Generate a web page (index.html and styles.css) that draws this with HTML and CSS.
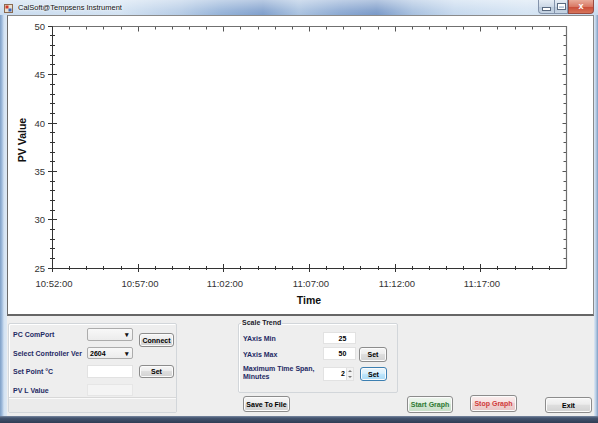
FILE: index.html
```html
<!DOCTYPE html>
<html>
<head>
<meta charset="utf-8">
<title>CalSoft@Tempsens Instrument</title>
<link rel="stylesheet" href="styles.css">
</head>
<body>
<div class="window">
  <div class="titlebar">
    <svg class="appicon" width="9" height="10" viewBox="0 0 9 10">
      <rect x="0.5" y="1.5" width="8" height="8" fill="#e8e0d0" stroke="#8a6a50"/>
      <rect x="1.5" y="2.5" width="3" height="3" fill="#d03a2a"/>
      <rect x="4.5" y="5.5" width="3" height="3" fill="#3a66c0"/>
    </svg>
    <span class="title">CalSoft@Tempsens Instrument</span>
    <div class="capbtns">
      <span class="cb min"><i class="minbar"></i></span>
      <span class="cb max"><i class="maxbox"></i></span>
      <span class="cb close">x</span>
    </div>
  </div>
  <div class="mid">
    <div class="lframe"></div>
    <div class="client">
      <div class="chart">
        <svg class="plot" width="585" height="298" viewBox="8 16 585 298">
          <path class="tk" d="M50 258.5h5M50 248.5h5M50 239.5h5M50 229.5h5M50 210.5h5M50 200.5h5M50 190.5h5M50 181.5h5M50 161.5h5M50 152.5h5M50 142.5h5M50 132.5h5M50 113.5h5M50 103.5h5M50 94.5h5M50 84.5h5M50 64.5h5M50 55.5h5M50 45.5h5M50 35.5h5"/>
          <path class="tk" d="M48 219.5h9M48 171.5h9M48 123.5h9M48 74.5h9M48 26.5h9M48 268.5h9"/>
          <path class="tk2" d="M563.5 258.5h3M563.5 248.5h3M563.5 239.5h3M563.5 229.5h3M562.5 219.5h4M563.5 210.5h3M563.5 200.5h3M563.5 190.5h3M563.5 181.5h3M562.5 171.5h4M563.5 161.5h3M563.5 152.5h3M563.5 142.5h3M563.5 132.5h3M562.5 123.5h4M563.5 113.5h3M563.5 103.5h3M563.5 94.5h3M563.5 84.5h3M562.5 74.5h4M563.5 64.5h3M563.5 55.5h3M563.5 45.5h3M563.5 35.5h3"/>
          <path class="tk" d="M69.5 266v4M86.5 266v4M103.5 266v4M121.5 266v4M155.5 266v4M172.5 266v4M189.5 266v4M206.5 266v4M240.5 266v4M258.5 266v4M275.5 266v4M292.5 266v4M326.5 266v4M343.5 266v4M360.5 266v4M378.5 266v4M412.5 266v4M429.5 266v4M446.5 266v4M463.5 266v4M497.5 266v4M515.5 266v4M532.5 266v4M549.5 266v4"/>
          <path class="tk" d="M52.5 264v8M138.5 264v8M223.5 264v8M309.5 264v8M395.5 264v8M480.5 264v8"/>
          <path class="tk2" d="M69.5 26.5v3M86.5 26.5v3M103.5 26.5v3M121.5 26.5v3M155.5 26.5v3M172.5 26.5v3M189.5 26.5v3M206.5 26.5v3M240.5 26.5v3M258.5 26.5v3M275.5 26.5v3M292.5 26.5v3M326.5 26.5v3M343.5 26.5v3M360.5 26.5v3M378.5 26.5v3M412.5 26.5v3M429.5 26.5v3M446.5 26.5v3M463.5 26.5v3M497.5 26.5v3M515.5 26.5v3M532.5 26.5v3M549.5 26.5v3M138.5 26.5v5M223.5 26.5v5M309.5 26.5v5M395.5 26.5v5M480.5 26.5v5"/>
          <path class="axis2" d="M52.5 26.5H566.5V268.5"/>
          <path class="axis" d="M52.5 26.5V268.5H566.5"/>
          <g class="ylab">
            <text x="45" y="30">50</text>
            <text x="45" y="78">45</text>
            <text x="45" y="127">40</text>
            <text x="45" y="175">35</text>
            <text x="45" y="223">30</text>
            <text x="45" y="272">25</text>
          </g>
          <g class="xlab">
            <text x="54" y="287">10:52:00</text>
            <text x="140" y="287">10:57:00</text>
            <text x="225" y="287">11:02:00</text>
            <text x="311" y="287">11:07:00</text>
            <text x="397" y="287">11:12:00</text>
            <text x="482" y="287">11:17:00</text>
          </g>
          <text class="atitle" x="309" y="304">Time</text>
          <text class="atitle" transform="translate(26 140) rotate(-90)">PV Value</text>
        </svg>
      </div>
      <div class="controls">
        <div class="group conn">
          <div class="cgrid">
            <label class="lbl">PC ComPort</label>
            <div class="combo"><span class="ctext"></span><span class="arrow">&#9662;</span></div>
            <button class="btn connect">Connect</button>
            <label class="lbl">Select Controller Ver</label>
            <div class="combo"><span class="ctext">2604</span><span class="arrow">&#9662;</span></div>
            <label class="lbl">Set Point °C</label>
            <div class="tbox"></div>
            <button class="btn setsp">Set</button>
            <label class="lbl">PV L Value</label>
            <div class="tbox dis"></div>
          </div>
          <div class="strip"></div>
        </div>
        <div class="midcol">
          <fieldset class="scale">
            <legend>Scale Trend</legend>
            <div class="sgrid">
              <label class="lbl">YAxis Min</label>
              <div class="tbox num">25</div>
              <span></span>
              <label class="lbl">YAxis Max</label>
              <div class="tbox num tall">50</div>
              <button class="btn sset">Set</button>
              <label class="lbl two">Maximum Time Span,<br>Minutes</label>
              <div class="spin"><span class="sval">2</span><span class="sarrows"><i class="up"></i><i class="dn"></i></span></div>
              <button class="btn sset focus">Set</button>
            </div>
          </fieldset>
          <button class="btn save">Save To File</button>
        </div>
        <div class="actions">
          <button class="btn start">Start Graph</button>
          <button class="btn stop">Stop Graph</button>
          <button class="btn exit">Exit</button>
        </div>
      </div>
    </div>
    <div class="rframe"></div>
  </div>
  <div class="bframe"></div>
</div>
</body>
</html>
```
FILE: styles.css
```css
* { box-sizing: border-box; margin: 0; padding: 0; }
html, body { width: 598px; height: 423px; overflow: hidden; }
body { font-family: "Liberation Sans", Arial, sans-serif; background: #cfdff0; }

.window { width: 598px; height: 423px; display: flex; flex-direction: column; }

.titlebar {
  height: 15px; flex: none; display: flex; align-items: center;
  background:
    linear-gradient(180deg, rgba(255,255,255,0.45) 0, rgba(255,255,255,0.1) 70%, rgba(255,255,255,0) 100%),
    linear-gradient(90deg, #c9dbee 0, #d2e2f2 20%, #b6cce6 30%, #94b2d8 37%, #7f9fcc 44%, #a9c2e0 50%, #8aa8d2 57%, #7999c8 63%, #a7c0df 69%, #c6d9ee 76%, #d5e4f3 88%, #c8daee 100%);
}
.appicon { margin-left: 4px; flex: none; }
.title {
  margin-left: 5px; font-size: 7.5px; color: #111;
  text-shadow: 0 0 3px #fff, 0 0 2px #fff;
}
.capbtns { margin-left: auto; margin-right: 4px; display: flex; height: 14px; align-self: flex-start; }
.cb {
  height: 14px; display: flex; align-items: center; justify-content: center;
  border: 1px solid #8393ab; border-top: none;
}
.min { width: 16px; border-radius: 0 0 0 4px; border-right: none;
  background: linear-gradient(#e6edf5, #cdd9e7 50%, #b8c8da 51%, #c6d4e3); }
.max { width: 14px;
  background: linear-gradient(#e6edf5, #cdd9e7 50%, #b8c8da 51%, #c6d4e3); }
.close { width: 26px; border-radius: 0 0 4px 0; color: #fff; font-size: 9px; font-weight: bold; line-height: 1;
  background: linear-gradient(#e9ab9a, #d97a66 50%, #c94a36 51%, #d6745a); border-color: #9a4a40; }
.minbar { display: block; width: 7px; height: 2px; background: #fff; margin-top: 5px; box-shadow: 0 0 0 1px #5a6a80; }
.maxbox { display: block; width: 7px; height: 5px; border: 1px solid #fff; border-top-width: 2px; box-shadow: 0 0 0 1px #5a6a80; }

.mid { flex: none; height: 401px; display: flex; }
.lframe { width: 7px; flex: none;
  background: linear-gradient(90deg, #7e9fc6 0, #9fbbdc 2px, #d3e2f2 4px, #dde8f4 7px); }
.rframe { width: 4px; flex: none;
  background: linear-gradient(90deg, #dde8f4 0, #b7cce4 2px, #7f9dc2 4px); }
.bframe { flex: none; height: 7px;
  background: linear-gradient(180deg, #7a8aa2 0, #445570 2px, #2f3c54 100%); }

.client { width: 587px; flex: none; display: flex; flex-direction: column; background: #eeeeee; }

.chart {
  height: 301px; flex: none; background: #fff;
  border: 1px solid #8a8a8a; border-bottom: 2px solid #666; border-left-color: #6a6a6a;
}
.plot { display: block; }
.tk { stroke: #333; stroke-width: 1; fill: none; }
.tk2 { stroke: #555; stroke-width: 1; fill: none; }
.axis { stroke: #333; stroke-width: 1; fill: none; }
.axis2 { stroke: #707070; stroke-width: 1.2; fill: none; }
.ylab text { font-family: "Liberation Sans", Arial, sans-serif; font-size: 9.5px; fill: #333; text-anchor: end; }
.xlab text { font-family: "Liberation Sans", Arial, sans-serif; font-size: 9.5px; fill: #333; text-anchor: middle; }
.atitle { font-family: "Liberation Sans", Arial, sans-serif; font-size: 10.5px; font-weight: bold; fill: #111; text-anchor: middle; }

.controls { flex: 1; display: flex; align-items: flex-start; padding-top: 2px; }

.lbl { font-size: 7px; font-weight: bold; color: #1e2a64; white-space: nowrap; align-self: center; }
.lbl.two { line-height: 8px; }

.group {
  margin-left: 1px; margin-top: 5px; width: 169px; height: 90px;
  border: 1px solid #d2d6da; border-radius: 2px; box-shadow: inset 1px 1px 0 #fff;
  display: flex; flex-direction: column;
}
.cgrid {
  display: grid; padding: 4px 0 0 4px;
  grid-template-columns: 74px 46px 41px;
  grid-template-rows: 13px 12px 13px 12px;
  row-gap: 6px;
}
.strip { flex: 1; margin-top: 1px; border-top: 1px solid #d8d8d8; box-shadow: inset 0 1px 0 #fafafa; background: #ebebeb; }

.combo {
  display: flex; align-items: center; justify-content: space-between;
  border: 1px solid #acacac; border-radius: 2px; padding: 0 3px 0 2px;
  background: linear-gradient(#f8f8f8, #ececec);
  font-size: 7px; font-weight: bold; color: #000;
}
.arrow { font-size: 7px; line-height: 1; color: #111; }
.tbox { background: #fff; border: 1px solid #e2e2e2; }
.tbox.dis { background: #f4f4f4; border-color: #e6e6e6; }
.tbox.num { font-size: 7px; font-weight: bold; display: flex; align-items: center; justify-content: center; color: #000; padding-left: 6px; }

.btn {
  font-family: "Liberation Sans", Arial, sans-serif; font-size: 7px; font-weight: bold; color: #000;
  border: 1px solid #8c8c8c; border-radius: 3px;
  background: linear-gradient(#f6f6f6 0, #ececec 45%, #dedede 50%, #d2d2d2 100%);
  box-shadow: inset 0 0 0 1px #fbfbfb;
  display: flex; align-items: center; justify-content: center;
}
.connect { grid-column: 3; grid-row: 1 / 3; align-self: start; justify-self: end; margin-top: 5px; width: 35px; height: 14px; }
.setsp { grid-column: 3; grid-row: 3; justify-self: end; width: 35px; height: 13px; }

.midcol { margin-left: 61px; display: flex; flex-direction: column; }
.scale {
  width: 160px; height: 75px;
  border: 1px solid #d2d6da; border-radius: 2px; box-shadow: inset 1px 1px 0 #fff;
  padding: 4px 0 0 4px; min-width: 0;
}
.scale legend { font-size: 7px; font-weight: bold; color: #1a1a2a; line-height: 10px; padding: 0 1px; margin-left: -2px; }
.sgrid {
  display: grid;
  grid-template-columns: 80px 33px 31px;
  grid-template-rows: 12px 15px 16px;
  row-gap: 3px;
}
.sgrid .tbox { align-self: start; height: 12px; }
.sgrid .tbox.tall { height: 13px; }
.sset { justify-self: end; width: 28px; height: 15px; }
.sset.focus { align-self: end; height: 14px; width: 27px; border-color: #3c7fb1;
  background: linear-gradient(#eaf6fd 0, #d9f0fc 45%, #bee6fd 50%, #a7d9f5 100%); }
.spin { align-self: end; height: 14px; display: flex; background: #fff; border: 1px solid #e2e2e2; width: 31px; }
.sval { flex: 1; font-size: 7px; font-weight: bold; text-align: right; padding-right: 1px; line-height: 12px; }
.sarrows { width: 7px; display: flex; flex-direction: column; border-left: 1px solid #e0e0e0; }
.sarrows i { flex: 1; display: flex; align-items: center; justify-content: center; background: #f2f2f2; }
.sarrows i::after { content: ""; border-left: 2px solid transparent; border-right: 2px solid transparent; }
.sarrows .up::after { border-bottom: 2px solid #777; }
.sarrows .dn::after { border-top: 2px solid #777; }

.save { margin-top: 3px; margin-left: 5px; width: 47px; height: 16px; }

.actions { display: flex; align-items: flex-start; margin-top: 78px; margin-left: 9px; }
.start { width: 46px; height: 17px; color: #2f7a34;
  background: linear-gradient(#eef6ee 0, #e2efe2 45%, #d3e6d3 50%, #c8dec8 100%); }
.stop { width: 47px; height: 17px; margin-left: 17px; margin-top: -1px; color: #d03c3c;
  background: linear-gradient(#fbeeee 0, #f6e0e0 45%, #f0d2d2 50%, #e8c6c6 100%); }
.exit { width: 47px; height: 16px; margin-left: 28px; margin-top: 1px; }
```
